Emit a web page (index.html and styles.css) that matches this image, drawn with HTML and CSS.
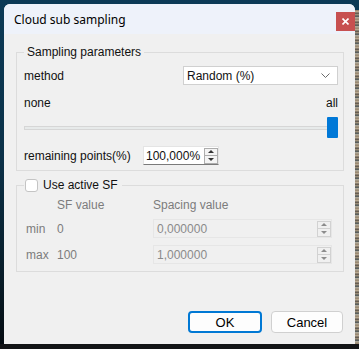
FILE: index.html
```html
<!DOCTYPE html>
<html lang="en">
<head>
  <meta charset="UTF-8">
  <title>Cloud sub sampling</title>
  <link rel="stylesheet" href="styles.css">
</head>
<body>

  <div class="window">
    <div class="titlebar">
      <span class="title">Cloud sub sampling</span>
      <div class="close">
        <svg width="7" height="7" viewBox="0 0 7 7"><path d="M0.5 0.5 L6.5 6.5 M6.5 0.5 L0.5 6.5" stroke="#fff" stroke-width="1.6"/></svg>
      </div>
    </div>

    <div class="client">
      <fieldset class="group">
        <legend>Sampling parameters</legend>

        <div class="row method-row">
          <span>method</span>
          <div class="combo">
            <span>Random (%)</span>
            <svg width="9" height="5" viewBox="0 0 9 5"><polyline points="0.5,0.5 4.5,4.5 8.5,0.5" fill="none" stroke="#6b6b6b" stroke-width="1"/></svg>
          </div>
        </div>

        <div class="range-labels">
          <span>none</span>
          <span>all</span>
        </div>

        <div class="slider">
          <div class="track"></div>
          <div class="thumb"></div>
        </div>

        <div class="row remaining-row">
          <span class="remaining-label">remaining points(%)</span>
          <div class="spinbox">
            <span>100,000%</span>
            <div class="spin-btn">
              <span class="up"></span>
              <span class="down"></span>
            </div>
          </div>
        </div>
      </fieldset>

      <fieldset class="group sf-group">
        <legend>
          <span class="checkbox"></span>
          <span>Use active SF</span>
        </legend>

        <div class="sf-grid">
          <span></span>
          <span class="muted">SF value</span>
          <span class="muted">Spacing value</span>

          <span class="muted side">min</span>
          <span class="muted">0</span>
          <div class="spinbox disabled">
            <span>0,000000</span>
            <div class="spin-btn">
              <span class="up"></span>
              <span class="down"></span>
            </div>
          </div>

          <span class="muted side">max</span>
          <span class="muted">100</span>
          <div class="spinbox disabled">
            <span>1,000000</span>
            <div class="spin-btn">
              <span class="up"></span>
              <span class="down"></span>
            </div>
          </div>
        </div>
      </fieldset>

      <div class="buttons">
        <button class="btn default">OK</button>
        <button class="btn cancel">Cancel</button>
      </div>
    </div>
  </div>

</body>
</html>
```

FILE: styles.css
```css
* {
  box-sizing: border-box;
}

html, body {
  margin: 0;
  width: 359px;
  height: 349px;
  overflow: hidden;
}

body {
  padding: 4px 4px 5px 4px;
  font-family: "Liberation Sans", Arial, sans-serif;
  font-size: 12px;
  color: #111;
  background:
    linear-gradient(#121416, #121416) left bottom / 100% 5px no-repeat,
    repeating-linear-gradient(to bottom, #8a7a66 0px, #c9b9a0 2px, #4b4540 3px, #b7a68c 5px, #2f3a40 6px, #d8cdb8 8px, #6e6252 9px) right 10px / 4px 100% no-repeat,
    linear-gradient(to bottom, #0c3a56 0%, #0b3148 45%, #081c28 80%, #050b10 100%);
}

.window {
  width: 351px;
  height: 340px;
  background: #f0f0f0;
  border-radius: 6px 6px 0 0;
  display: flex;
  flex-direction: column;
  overflow: hidden;
}

.titlebar {
  height: 30px;
  flex-shrink: 0;
  background: #eef2fa;
  display: flex;
  justify-content: space-between;
  align-items: flex-start;
  padding-left: 10px;
}

.title {
  font-family: "Noto Sans", "Segoe UI", sans-serif;
  font-size: 12px;
  line-height: 30px;
  padding-top: 1px;
  color: #000;
}

.close {
  width: 19px;
  height: 19px;
  margin-top: 8px;
  background: #c75050;
  display: flex;
  align-items: center;
  justify-content: center;
}

.client {
  flex: 1;
  display: flex;
  flex-direction: column;
  padding: 10px 11px 11px 12px;
}

.group {
  margin: 0;
  min-width: 0;
  border: 1px solid #dcdcdc;
  padding: 6px 5px 5px 7px;
}

.group legend {
  padding: 0 3px;
  line-height: 16px;
  height: 16px;
}

.row {
  display: flex;
  align-items: center;
}

.method-row {
  height: 19px;
  justify-content: space-between;
}

.combo {
  width: 155px;
  height: 19px;
  background: #fff;
  border: 1px solid #d0d0d0;
  display: flex;
  align-items: center;
  justify-content: space-between;
  padding: 0 7px 0 3px;
}

.range-labels {
  margin-top: 11px;
  height: 14px;
  line-height: 14px;
  display: flex;
  justify-content: space-between;
}

.slider {
  margin-top: 7px;
  height: 21px;
  display: grid;
  align-items: center;
}

.slider > * {
  grid-area: 1 / 1;
}

.track {
  height: 4px;
  background: #e7eaea;
  border: 1px solid #d6d6d6;
}

.thumb {
  justify-self: end;
  width: 11px;
  height: 21px;
  background: #0078d7;
  border-radius: 1px;
}

.remaining-row {
  margin-top: 8px;
  height: 19px;
}

.remaining-label {
  width: 119px;
}

.spinbox {
  height: 19px;
  background: #fff;
  border: 1px solid #e4e4e4;
  border-bottom-color: #7a7a7a;
  display: flex;
  align-items: center;
  justify-content: space-between;
  padding: 0 0 0 2px;
}

.remaining-row .spinbox {
  width: 76px;
}

.spin-btn {
  width: 14px;
  height: 16px;
  border: 1px solid #adadad;
  background: #f4f4f4;
  display: flex;
  flex-direction: column;
}

.spin-btn span {
  flex: 1;
  display: flex;
  align-items: center;
  justify-content: center;
}

.spin-btn .up {
  border-bottom: 1px solid #adadad;
}

.spin-btn .up::before,
.spin-btn .down::before {
  content: "";
  border-left: 3px solid transparent;
  border-right: 3px solid transparent;
}

.spin-btn .up::before {
  border-bottom: 3px solid #333;
}

.spin-btn .down::before {
  border-top: 3px solid #333;
}

.sf-group {
  margin-top: 6px;
  padding-top: 5px;
  padding-bottom: 7px;
}

.sf-group legend {
  display: flex;
  align-items: center;
  gap: 5px;
  padding: 0 4px 0 1px;
}

.checkbox {
  width: 13px;
  height: 13px;
  background: #fff;
  border: 1px solid #c4c4c4;
  border-radius: 3px;
}

.sf-grid {
  display: grid;
  grid-template-columns: 33px 96px 179px;
  grid-template-rows: 14px 19px 19px;
  row-gap: 7px;
  align-items: center;
  line-height: 14px;
}

.muted {
  color: #7c7c7c;
}

.side {
  padding-left: 2px;
}

.spinbox.disabled {
  background: #f0f0f0;
  border: 1px solid #e6e6e6;
  color: #8a8a8a;
  padding-left: 3px;
}

.spinbox.disabled .spin-btn {
  border-color: #d2d2d2;
  background: #f0f0f0;
}

.spinbox.disabled .spin-btn .up {
  border-bottom-color: #d2d2d2;
}

.spinbox.disabled .spin-btn .up::before {
  border-bottom-color: #8c8c8c;
}

.spinbox.disabled .spin-btn .down::before {
  border-top-color: #8c8c8c;
}

.buttons {
  margin-top: auto;
  display: flex;
  justify-content: flex-end;
  gap: 9px;
  padding-right: 1px;
}

.btn {
  height: 22px;
  font-family: "Liberation Sans", Arial, sans-serif;
  font-size: 13px;
  color: #000;
  background: #fdfdfd;
  border: 1px solid #d0d0d0;
  border-radius: 4px;
  padding: 0;
}

.btn.default {
  width: 74px;
  border: 2px solid #0078d4;
}

.btn.cancel {
  width: 72px;
}
```
